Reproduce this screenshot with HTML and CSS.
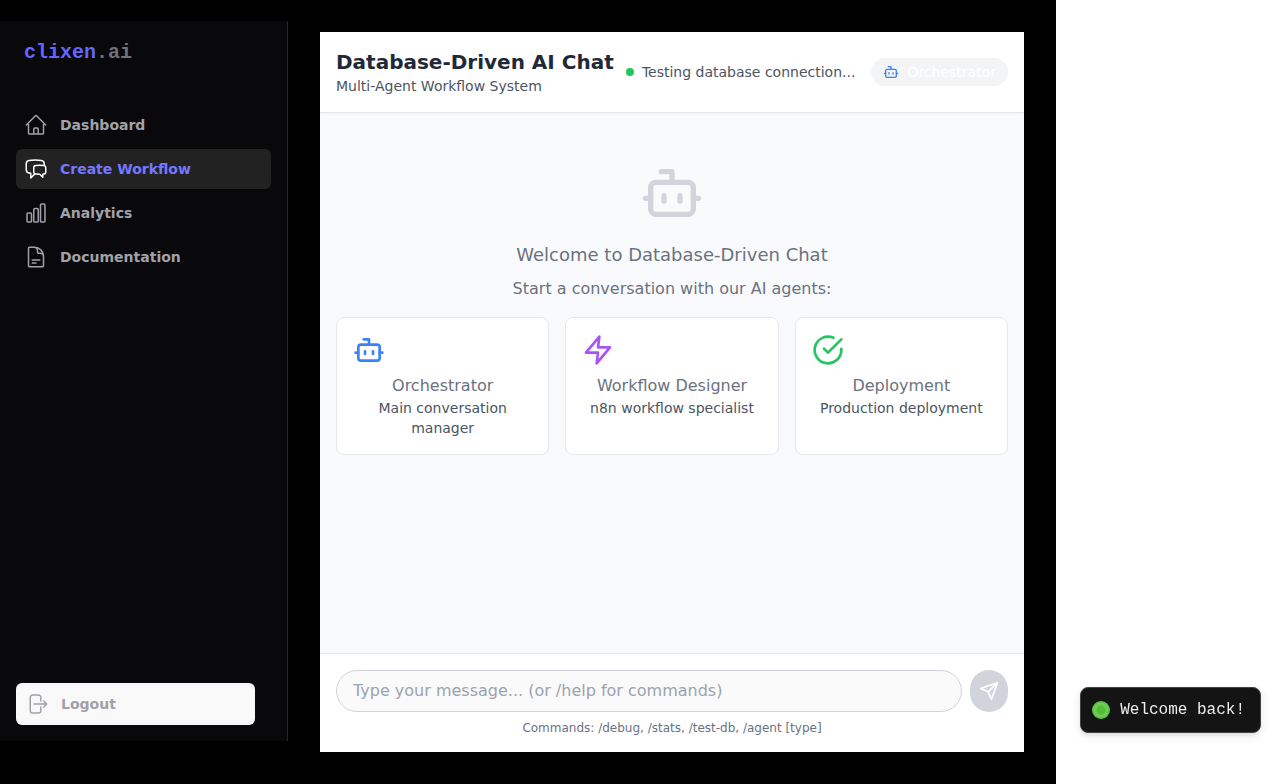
FILE: index.html
```html
<!DOCTYPE html>
<html lang="en">
<head>
<meta charset="utf-8">
<meta name="viewport" content="width=device-width, initial-scale=1">
<title>clixen.ai</title>
<link rel="stylesheet" href="styles.css">
</head>
<body>
<svg class="sprite" aria-hidden="true">
  <symbol id="bot" viewBox="0 0 24 24"><path d="M12 8V4H8"/><rect width="16" height="12" x="4" y="8" rx="2"/><path d="M2 14h2M20 14h2M15 13v2M9 13v2"/></symbol>
</svg>
<div class="app">
  <aside class="sidebar">
    <div class="logo">clixen<span class="logo-suffix">.ai</span></div>
    <nav class="nav">
      <a class="nav-item" href="#"><svg class="icon outline" viewBox="0 0 24 24"><path d="m2.25 12 8.954-8.955c.44-.439 1.152-.439 1.591 0L21.75 12M4.5 9.75v10.125c0 .621.504 1.125 1.125 1.125H9.75v-4.875c0-.621.504-1.125 1.125-1.125h2.25c.621 0 1.125.504 1.125 1.125V21h4.125c.621 0 1.125-.504 1.125-1.125V9.75M8.25 21h8.25"/></svg>Dashboard</a>
      <a class="nav-item active" href="#" aria-current="page"><svg class="icon outline" viewBox="0 0 24 24"><path d="M20.25 8.511c.884.284 1.5 1.128 1.5 2.097v4.286c0 1.136-.847 2.1-1.98 2.193-.34.027-.68.052-1.02.072v3.091l-3-3c-1.354 0-2.694-.055-4.02-.163a2.115 2.115 0 0 1-.825-.242m9.345-8.334a2.126 2.126 0 0 0-.476-.095 48.64 48.64 0 0 0-8.048 0c-1.131.094-1.976 1.057-1.976 2.192v4.286c0 .837.46 1.58 1.155 1.951m9.345-8.334V6.637c0-1.621-1.152-3.026-2.76-3.235A48.455 48.455 0 0 0 11.25 3c-2.115 0-4.198.137-6.24.402-1.608.209-2.76 1.614-2.76 3.235v6.226c0 1.621 1.152 3.026 2.76 3.235.577.075 1.157.14 1.74.194V21l4.155-4.155"/></svg>Create Workflow</a>
      <a class="nav-item" href="#"><svg class="icon outline" viewBox="0 0 24 24"><path d="M3 13.125C3 12.504 3.504 12 4.125 12h2.25c.621 0 1.125.504 1.125 1.125v6.75C7.5 20.496 6.996 21 6.375 21h-2.25A1.125 1.125 0 0 1 3 19.875v-6.75ZM9.75 8.625c0-.621.504-1.125 1.125-1.125h2.25c.621 0 1.125.504 1.125 1.125v11.25c0 .621-.504 1.125-1.125 1.125h-2.25a1.125 1.125 0 0 1-1.125-1.125V8.625ZM16.5 4.125c0-.621.504-1.125 1.125-1.125h2.25C20.496 3 21 3.504 21 4.125v15.75c0 .621-.504 1.125-1.125 1.125h-2.25a1.125 1.125 0 0 1-1.125-1.125V4.125Z"/></svg>Analytics</a>
      <a class="nav-item" href="#"><svg class="icon outline" viewBox="0 0 24 24"><path d="M19.5 14.25v-2.625a3.375 3.375 0 0 0-3.375-3.375h-1.5A1.125 1.125 0 0 1 13.5 7.125v-1.5a3.375 3.375 0 0 0-3.375-3.375H8.25m0 12.75h7.5m-7.5 3H12M10.5 2.25H5.625c-.621 0-1.125.504-1.125 1.125v17.25c0 .621.504 1.125 1.125 1.125h12.75c.621 0 1.125-.504 1.125-1.125V11.25a9 9 0 0 0-9-9Z"/></svg>Documentation</a>
    </nav>
    <button class="logout" type="button"><svg class="icon outline" viewBox="0 0 24 24"><path d="M15.75 9V5.25A2.25 2.25 0 0 0 13.5 3h-6a2.25 2.25 0 0 0-2.25 2.25v13.5A2.25 2.25 0 0 0 7.5 21h6a2.25 2.25 0 0 0 2.25-2.25V15m3 0 3-3m0 0-3-3m3 3H9"/></svg>Logout</button>
  </aside>

  <main class="chat">
    <header class="chat-header">
      <div>
        <h1 class="title">Database-Driven AI Chat</h1>
        <p class="subtitle">Multi-Agent Workflow System</p>
      </div>
      <div class="header-side">
        <div class="status"><span class="dot"></span>Testing database connection...</div>
        <div class="agent-pill"><svg class="icon-sm blue"><use href="#bot"/></svg>Orchestrator</div>
      </div>
    </header>

    <section class="messages">
      <svg class="hero-icon"><use href="#bot"/></svg>
      <h2 class="welcome">Welcome to Database-Driven Chat</h2>
      <p class="intro">Start a conversation with our AI agents:</p>
      <div class="cards">
        <article class="card">
          <svg class="card-icon blue"><use href="#bot"/></svg>
          <h3 class="card-title">Orchestrator</h3>
          <p class="card-text">Main conversation manager</p>
        </article>
        <article class="card">
          <svg class="card-icon purple" viewBox="0 0 24 24"><path d="M13 2 3 14h9l-1 8 10-12h-9l1-8z"/></svg>
          <h3 class="card-title">Workflow Designer</h3>
          <p class="card-text">n8n workflow specialist</p>
        </article>
        <article class="card">
          <svg class="card-icon green" viewBox="0 0 24 24"><path d="M22 11.08V12a10 10 0 1 1-5.93-9.14"/><path d="m9 11 3 3L22 4"/></svg>
          <h3 class="card-title">Deployment</h3>
          <p class="card-text">Production deployment</p>
        </article>
      </div>
    </section>

    <form class="composer">
      <div class="composer-row">
        <input class="message-input" type="text" aria-label="Message" placeholder="Type your message... (or /help for commands)">
        <button class="send" type="button" aria-label="Send"><svg class="icon-md" viewBox="0 0 24 24"><path d="m22 2-7 20-4-9-9-4Z"/><path d="M22 2 11 13"/></svg></button>
      </div>
      <p class="hint">Commands: /debug, /stats, /test-db, /agent [type]</p>
    </form>
  </main>
</div>

<div class="toast" role="status"><span class="toast-icon"></span>Welcome back!</div>
</body>
</html>
```

FILE: styles.css
```css
* { box-sizing: border-box; }

body {
  margin: 0;
  background: #fff;
  font-family: "DejaVu Sans", sans-serif;
  font-size: 16px;
  line-height: 24px;
}

h1, h2, h3, p { margin: 0; font-weight: 400; }

svg {
  display: block;
  flex: none;
  fill: none;
  stroke: currentColor;
  stroke-width: 2;
  stroke-linecap: round;
  stroke-linejoin: round;
}

.sprite { display: none; }
.icon { width: 24px; height: 24px; }
.icon-sm { width: 16px; height: 16px; }
.icon-md { width: 20px; height: 20px; }
.outline { stroke-width: 1.5; }
.blue { color: #3b82f6; }
.purple { color: #a855f7; }
.green { color: #22c55e; }

.app {
  display: flex;
  min-height: 100vh;
  margin-right: 224px;
  background: #000;
}

/* Sidebar */
.sidebar {
  display: flex;
  flex-direction: column;
  flex: none;
  width: 288px;
  margin: 21px 0 43px;
  padding: 16px;
  background: #09090b;
  border-right: 1px solid #27272a;
}

.logo {
  padding: 0 8px;
  font: 700 20px/32px "Liberation Mono", monospace;
  color: #6366ff;
}

.logo-suffix { color: #71717a; }

.nav {
  display: flex;
  flex-direction: column;
  gap: 4px;
  margin-top: 36px;
}

.nav-item {
  display: flex;
  align-items: center;
  gap: 12px;
  padding: 8px;
  border-radius: 6px;
  font-size: 14px;
  font-weight: 700;
  color: #a1a1aa;
  text-decoration: none;
}

.active { background: #222; color: #7578ff; }
.active .icon { color: #fff; }

.logout {
  display: flex;
  align-items: center;
  gap: 12px;
  margin-top: auto;
  margin-right: 16px;
  padding: 8px;
  border: 1px solid transparent;
  border-radius: 6px;
  background: #f9f9f9;
  font: 700 14px/24px "DejaVu Sans", sans-serif;
  color: #a1a1aa;
}

/* Chat panel */
.chat {
  display: flex;
  flex-direction: column;
  flex: 1;
  min-width: 0;
  margin: 32px;
  background: #fff;
}

.chat-header {
  display: flex;
  align-items: center;
  justify-content: space-between;
  padding: 16px;
  border-bottom: 1px solid #e5e7eb;
  box-shadow: 0 1px 2px rgba(0, 0, 0, 0.05);
  z-index: 1;
}

.title {
  font-size: 20px;
  font-weight: 700;
  line-height: 28px;
  color: #1f2937;
}

.subtitle, .status, .agent-pill, .card-text {
  font-size: 14px;
  line-height: 20px;
  color: #4b5563;
}

.header-side { display: flex; align-items: center; gap: 16px; }
.status { display: flex; align-items: center; gap: 8px; }

.dot {
  width: 8px;
  height: 8px;
  border-radius: 50%;
  background: #22c55e;
}

.agent-pill {
  display: flex;
  align-items: center;
  gap: 8px;
  padding: 4px 12px;
  border-radius: 999px;
  background: #f3f4f6;
  color: #fff;
}

.messages {
  flex: 1;
  padding: 48px 16px;
  background: #f9fafb;
  text-align: center;
  color: #6b7280;
}

.hero-icon {
  width: 64px;
  height: 64px;
  margin: 0 auto 16px;
  color: #d1d5db;
}

.welcome { margin-bottom: 8px; font-size: 18px; line-height: 28px; }
.intro { margin-bottom: 16px; }

.cards {
  display: grid;
  grid-template-columns: repeat(3, 1fr);
  gap: 16px;
}

.card {
  padding: 16px;
  border: 1px solid #e5e7eb;
  border-radius: 8px;
  background: #fff;
}

.card-icon { width: 32px; height: 32px; margin-bottom: 8px; }
.card-title { font-size: 16px; }

/* Composer */
.composer { padding: 16px; border-top: 1px solid #e5e7eb; }
.composer-row { display: flex; gap: 8px; }

.message-input {
  flex: 1;
  min-width: 0;
  height: 42px;
  padding: 7px 16px 9px;
  border: 1px solid #d1d5db;
  border-radius: 999px;
  background: #fafafa;
  font: 16px/24px "DejaVu Sans", sans-serif;
  color: #1f2937;
}

.message-input::placeholder { color: #9ca3af; }

.send {
  display: flex;
  align-items: center;
  justify-content: center;
  width: 38px;
  padding: 0;
  border: 0;
  border-radius: 999px;
  background: #d1d5db;
  color: #fff;
}

.hint {
  margin-top: 8px;
  font-size: 12px;
  line-height: 16px;
  text-align: center;
  color: #6b7280;
}

/* Toast */
.toast {
  position: fixed;
  right: 19px;
  bottom: 51px;
  display: flex;
  align-items: center;
  gap: 10px;
  padding: 10px 15px 10px 11px;
  border: 1px solid #444;
  border-radius: 8px;
  background: #141414;
  box-shadow: 0 3px 10px rgba(0, 0, 0, 0.1), 0 3px 3px rgba(0, 0, 0, 0.05);
  font: 16px/24px "Liberation Mono", monospace;
  color: #eee;
}

.toast-icon {
  width: 18px;
  height: 18px;
  border-radius: 50%;
  background: radial-gradient(circle, #56bd3c 0 4px, #6ace50 5px 7px, #5cc142 8px);
}
```
